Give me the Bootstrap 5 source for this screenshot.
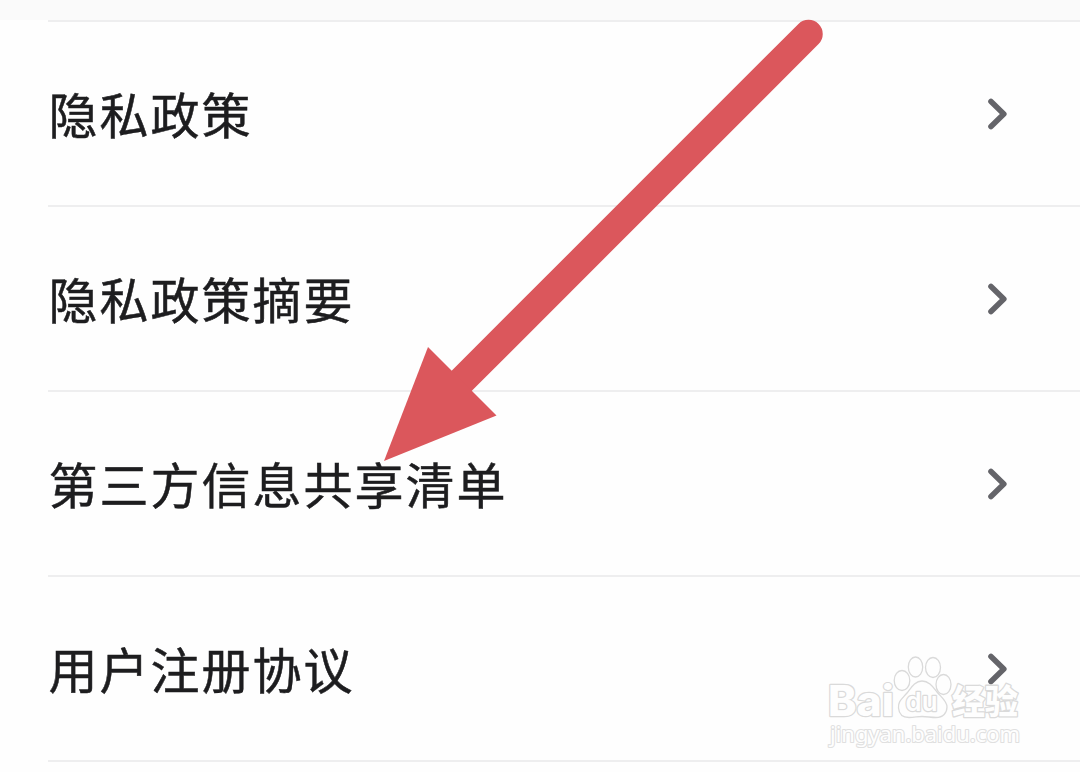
<!DOCTYPE html>
<html lang="zh-CN">
<head>
  <meta charset="UTF-8">
  <meta name="viewport" content="width=device-width, initial-scale=1">
  <title>隐私政策</title>
  <link href="https://cdn.jsdelivr.net/npm/bootstrap@5.3.3/dist/css/bootstrap.min.css" rel="stylesheet">
  <style>
    body {
      background-color: #fefefe;
      font-family: "Noto Sans CJK SC", sans-serif;
      height: 772px;
    }
    .top-strip {
      height: 20px;
      background-color: #fafafa;
    }
    .policy-list {
      margin-left: 48px;
    }
    .policy-item {
      height: 185px;
      padding: 0 71px 0 .5px;
      border-top: 2px solid #eeeeef;
      color: #1d1d1f;
      font-size: 49px;
      line-height: 72px;
      letter-spacing: 2px;
      -webkit-text-stroke: .5px #1d1d1f;
    }
    .policy-item:hover {
      color: #1d1d1f;
    }
    .policy-item span {
      padding-bottom: 2px;
    }
    .last-line {
      height: 2px;
      background-color: #eeeeef;
    }
    .overlay {
      pointer-events: none;
    }
  </style>
</head>
<body class="position-relative overflow-hidden">

  <!-- Faixa superior -->
  <div class="top-strip"></div>

  <!-- Lista de itens -->
  <div class="policy-list d-flex flex-column">
    <a href="#" class="policy-item d-flex align-items-center justify-content-between text-decoration-none">
      <span>隐私政策</span>
      <svg width="24" height="34" viewBox="0 0 24 34" fill="none" stroke="#646469" stroke-width="5.6" stroke-linecap="round" stroke-linejoin="round"><path d="M6 4.500 18.800 17 6 29.500"/></svg>
    </a>
    <a href="#" class="policy-item d-flex align-items-center justify-content-between text-decoration-none">
      <span>隐私政策摘要</span>
      <svg width="24" height="34" viewBox="0 0 24 34" fill="none" stroke="#646469" stroke-width="5.6" stroke-linecap="round" stroke-linejoin="round"><path d="M6 4.500 18.800 17 6 29.500"/></svg>
    </a>
    <a href="#" class="policy-item d-flex align-items-center justify-content-between text-decoration-none">
      <span>第三方信息共享清单</span>
      <svg width="24" height="34" viewBox="0 0 24 34" fill="none" stroke="#646469" stroke-width="5.6" stroke-linecap="round" stroke-linejoin="round"><path d="M6 4.500 18.800 17 6 29.500"/></svg>
    </a>
    <a href="#" class="policy-item d-flex align-items-center justify-content-between text-decoration-none">
      <span>用户注册协议</span>
      <svg width="24" height="34" viewBox="0 0 24 34" fill="none" stroke="#646469" stroke-width="5.6" stroke-linecap="round" stroke-linejoin="round"><path d="M6 4.500 18.800 17 6 29.500"/></svg>
    </a>
    <div class="last-line"></div>
  </div>

  <!-- Seta vermelha e marca d'água sobre a lista -->
  <svg class="overlay position-absolute top-0 start-0" width="1080" height="772" viewBox="0 0 1080 772">
    <path d="M808.500 34 455 387.500" stroke="#db575c" stroke-width="28.500" stroke-linecap="round"/>
    <path d="M384 461 428 347 496.500 415.500Z" fill="#db575c"/>

    <g fill="#fefefe" stroke="#dadada" stroke-width="1.300" stroke-linejoin="round">
      <ellipse cx="902" cy="680.500" rx="7.800" ry="10"/>
      <ellipse cx="915.500" cy="667" rx="7.200" ry="10"/>
      <ellipse cx="933" cy="667.500" rx="7.500" ry="10"/>
      <ellipse cx="943.500" cy="684.500" rx="7.500" ry="10"/>
      <path d="M922 681C915 681 911 688 907 693C902 699 898 701 898.500 708C899 714 903 717.500 909 717.500C914 717.500 918 716.500 922 716.500C927 716.500 931 717.500 936 717.500C943 717.500 947 713 947 707C947 701 941 697 937 692C933 687 929 681 922 681Z"/>
      <g paint-order="stroke">
        <text x="828" y="716" font-size="42" font-weight="800" stroke-width="2.400" font-family="Inter, sans-serif" textLength="66" lengthAdjust="spacingAndGlyphs">Bai</text>
        <text x="905.500" y="711" font-size="26" font-weight="600" stroke-width="2.400" font-family="Inter, sans-serif" textLength="32" lengthAdjust="spacingAndGlyphs">du</text>
        <text x="952" y="714" font-size="34" font-weight="900" stroke-width="2.600" font-family="'Noto Sans CJK SC', sans-serif" textLength="66" lengthAdjust="spacingAndGlyphs">经验</text>
        <text x="830" y="742" font-size="22.500" font-weight="400" stroke="#e0e0e0" stroke-width="2.200" font-family="'Noto Sans', sans-serif" textLength="190" lengthAdjust="spacingAndGlyphs">jingyan.baidu.com</text>
      </g>
    </g>
  </svg>

  <script src="https://cdn.jsdelivr.net/npm/bootstrap@5.3.3/dist/js/bootstrap.bundle.min.js"></script>
</body>
</html>
